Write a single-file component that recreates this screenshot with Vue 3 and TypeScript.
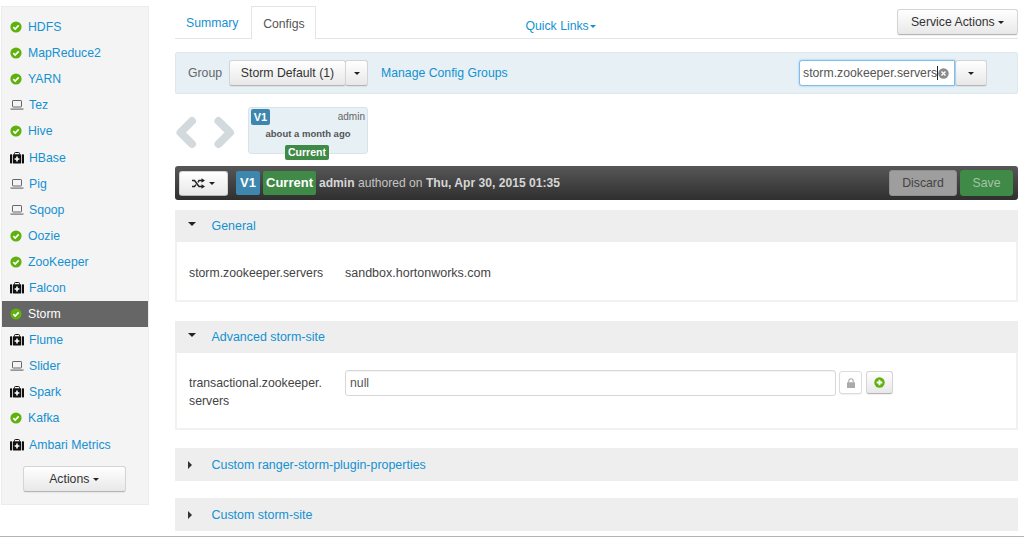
<template>
  <div class="page">
    <aside class="sidebar">
      <ul class="svc-list">
        <li v-for="svc in services" :key="svc.name" class="svc-item" :class="{ active: svc.name === 'Storm' }">
          <span class="svc-icon">
            <svg v-if="svc.icon === 'ok'" width="12" height="12" viewBox="0 0 12 12">
              <circle cx="6" cy="6" r="5.6" fill="#5fb10d" />
              <path d="M3.3 6.1 5.2 8 8.7 4.4" fill="none" stroke="#fff" stroke-width="1.7" />
            </svg>
            <svg v-else-if="svc.icon === 'laptop'" width="14" height="12" viewBox="0 0 14 12">
              <rect x="2.5" y="1.5" width="9" height="6.5" rx=".6" fill="none" stroke="#666" />
              <path d="M.3 9.5h13.4v.6l-.6.6H.9l-.6-.6z" fill="#777" />
            </svg>
            <svg v-else width="14" height="12" viewBox="0 0 14 12">
              <path d="M4.5 2.5V1.4Q4.5.5 5.4.5h3.2q.9 0 .9.9v1.1" fill="none" stroke="#111" />
              <rect x="0" y="2.3" width="2.2" height="9.2" rx=".7" fill="#111" />
              <rect x="3" y="2.3" width="8" height="9.2" fill="#111" />
              <rect x="11.8" y="2.3" width="2.2" height="9.2" rx=".7" fill="#111" />
              <path d="M6.2 4.6h1.6v1.6h1.6v1.6H7.800v1.600H6.200V7.800H4.600V6.200h1.600z" fill="#fff" />
            </svg>
          </span>
          <a class="svc-name" :class="'gap-' + svc.icon">{{ svc.name }}</a>
        </li>
      </ul>
      <div class="actions-wrap">
        <button class="btn actions-btn">Actions <i class="caret" /></button>
      </div>
    </aside>

    <main class="main">
      <div class="tabs">
        <a class="tab">Summary</a>
        <a class="tab current">Configs</a>
        <a class="quick-links">Quick Links<i class="caret blue" /></a>
        <button class="btn service-btn">Service Actions <i class="caret" /></button>
      </div>

      <div class="group-bar">
        <span class="group-label">Group</span>
        <button class="btn group-btn">Storm Default (1)</button>
        <button class="btn group-caret"><i class="caret" /></button>
        <a class="manage-link">Manage Config Groups</a>
        <div class="search-box">
          <span class="search-text">storm.zookeeper.servers</span><span class="text-cursor" />
          <svg class="search-clear" width="11" height="11" viewBox="0 0 11 11">
            <circle cx="5.500" cy="5.500" r="5.200" fill="#8b8b8b" />
            <path d="M3.500 3.500l4 4M7.500 3.500l-4 4" stroke="#fff" stroke-width="1.400" />
          </svg>
        </div>
        <button class="btn search-caret"><i class="caret" /></button>
      </div>

      <div class="versions">
        <svg class="chevrons" width="60" height="35" viewBox="0 0 60 35">
          <path d="M17 6 5.500 17.500 17 29" fill="none" stroke="#d3dade" stroke-width="8" stroke-linecap="round" stroke-linejoin="round" />
          <path d="M43.500 6 55 17.500 43.500 29" fill="none" stroke="#d3dade" stroke-width="8" stroke-linecap="round" stroke-linejoin="round" />
        </svg>
        <div class="version-box">
          <div class="version-top">
            <span class="v-tag small">V1</span>
            <span class="version-user">admin</span>
          </div>
          <div class="version-when">about a month ago</div>
          <span class="current-tag">Current</span>
        </div>
      </div>

      <div class="dark-bar">
        <button class="btn compare-btn">
          <svg width="13" height="11" viewBox="0 0 13 11">
            <path d="M0 2.500h2.500L7 8.500h3M0 8.500h2.500L4 6.600M6 4.400 7 2.500h3" fill="none" stroke="#222" stroke-width="1.500" />
            <path d="M9.500.2 13 2.500 9.500 4.800zM9.500 6.200 13 8.500l-3.500 2.300z" fill="#222" />
          </svg>
          <i class="caret" />
        </button>
        <span class="v-tag big">V1</span>
        <span class="cur-tag big">Current</span>
        <span class="authored"><b>admin</b> authored on <b>Thu, Apr 30, 2015 01:35</b></span>
        <button class="btn discard-btn">Discard</button>
        <button class="btn save-btn">Save</button>
      </div>

      <section class="panel">
        <header class="panel-head"><i class="caret head-caret" /><a>General</a></header>
        <div class="panel-body general-body">
          <span class="prop-name">storm.zookeeper.servers</span>
          <span class="prop-value">sandbox.hortonworks.com</span>
        </div>
      </section>

      <section class="panel advanced">
        <header class="panel-head"><i class="caret head-caret" /><a>Advanced storm-site</a></header>
        <div class="panel-body advanced-body">
          <span class="prop-name wrap">transactional.zookeeper.<br />servers</span>
          <div class="prop-input">null</div>
          <button class="btn lock-btn">
            <svg width="8" height="10" viewBox="0 0 8 10">
              <path d="M1.800 4.500V3a2.200 2.200 0 0 1 4.400 0v1.500" fill="none" stroke="#aaa" stroke-width="1.100" />
              <rect y="4.200" width="8" height="5.800" rx=".6" fill="#aaa" />
            </svg>
          </button>
          <button class="btn add-btn">
            <svg width="11" height="11" viewBox="0 0 11 11">
              <circle cx="5.500" cy="5.500" r="5.200" fill="#5fb10d" />
              <path d="M5.500 2.700v5.600M2.700 5.500h5.600" stroke="#fff" stroke-width="1.800" />
            </svg>
          </button>
        </div>
      </section>

      <section class="panel closed first-closed">
        <header class="panel-head"><i class="caret side head-caret" /><a>Custom ranger-storm-plugin-properties</a></header>
      </section>
      <section class="panel closed second-closed">
        <header class="panel-head"><i class="caret side head-caret" /><a>Custom storm-site</a></header>
      </section>
    </main>
    <div class="bottom-line" />
  </div>
</template>

<script setup lang="ts">
interface Service {
  name: string
  icon: 'ok' | 'laptop' | 'kit'
}

const services: Service[] = [
  { name: 'HDFS', icon: 'ok' },
  { name: 'MapReduce2', icon: 'ok' },
  { name: 'YARN', icon: 'ok' },
  { name: 'Tez', icon: 'laptop' },
  { name: 'Hive', icon: 'ok' },
  { name: 'HBase', icon: 'kit' },
  { name: 'Pig', icon: 'laptop' },
  { name: 'Sqoop', icon: 'laptop' },
  { name: 'Oozie', icon: 'ok' },
  { name: 'ZooKeeper', icon: 'ok' },
  { name: 'Falcon', icon: 'kit' },
  { name: 'Storm', icon: 'ok' },
  { name: 'Flume', icon: 'kit' },
  { name: 'Slider', icon: 'laptop' },
  { name: 'Spark', icon: 'kit' },
  { name: 'Kafka', icon: 'ok' },
  { name: 'Ambari Metrics', icon: 'kit' },
]
</script>

<style>
html,
body {
  margin: 0;
  background: #fff;
}
</style>

<style scoped>
.page {
  position: relative;
  width: 1024px;
  height: 537px;
  overflow: hidden;
  display: flex;
  align-items: flex-start;
  font-family: "Liberation Sans", Arial, sans-serif;
  font-size: 12.25px;
  color: #555;
  background: #fff;
}

a {
  color: #1491d1;
}

.caret {
  display: inline-block;
  width: 0;
  height: 0;
  vertical-align: middle;
  border-top: 3.5px solid #222;
  border-left: 3.5px solid transparent;
  border-right: 3.5px solid transparent;
}

.caret.blue {
  border-top-color: #1491d1;
  margin-left: 1px;
}

.caret.side {
  border-top: 4px solid transparent;
  border-bottom: 4px solid transparent;
  border-left: 4.500px solid #333;
  border-right: 0;
}

.btn {
  box-sizing: border-box;
  margin: 0;
  padding: 0;
  font: inherit;
  color: #333;
  border: 1px solid #d4d4d4;
  border-bottom-color: #b5b5b5;
  border-radius: 3px;
  background: linear-gradient(#fff, #e8e8e8);
  box-shadow: 0 1px 1px rgba(0, 0, 0, 0.06);
}

/* sidebar */
.sidebar {
  box-sizing: border-box;
  flex-shrink: 0;
  width: 148px;
  height: 499px;
  margin: 6px 0 0 1px;
  padding-top: 7px;
  background: #f4f4f4;
  border: 1px solid #ececec;
}

.svc-list {
  list-style: none;
  margin: 0;
  padding: 0;
}

.svc-item {
  display: flex;
  align-items: center;
  height: 26.1px;
  padding-left: 8px;
}

.svc-item.active {
  background: #666;
}

.svc-item.active .svc-name {
  color: #fff;
}

.svc-icon {
  display: flex;
  width: 15px;
  justify-content: flex-start;
}

.svc-name {
  margin-left: 3px;
}

.gap-laptop,
.gap-kit {
  margin-left: 4px;
}

.actions-wrap {
  display: flex;
  justify-content: center;
  margin-top: 8.3px;
  padding-right: 2px;
}

.actions-btn {
  width: 103px;
  height: 26px;
}

/* main */
.main {
  width: 843px;
  margin-left: 26px;
  flex-shrink: 0;
}

.tabs {
  position: relative;
  box-sizing: border-box;
  display: flex;
  align-items: flex-start;
  height: 39px;
  border-bottom: 1px solid #e4e4e4;
}

.tab {
  box-sizing: border-box;
  height: 33px;
  margin-top: 6px;
  padding: 10px 0 0;
  line-height: 14px;
  margin-left: 11px;
}

.tab.current {
  width: 65px;
  margin-left: 13px;
  text-align: center;
  color: #555;
  background: #fff;
  border: 1px solid #e4e4e4;
  border-bottom: 0;
}

.quick-links {
  margin-left: 209px;
  margin-top: 19px;
  line-height: 14px;
}

.service-btn {
  width: 121px;
  height: 26px;
  margin-left: auto;
  margin-top: 9px;
}

.group-bar {
  box-sizing: border-box;
  display: flex;
  align-items: center;
  height: 42px;
  margin-top: 13px;
  padding-left: 12px;
  background: #e6f0f5;
  border: 1px solid #dfe8ec;
  border-radius: 2px;
}

.group-label {
  width: 41px;
  color: #666;
}

.group-btn {
  width: 117px;
  height: 26px;
}

.group-caret {
  width: 23px;
  height: 26px;
  margin-left: -1px;
}

.manage-link {
  margin-left: 13px;
}

.search-box {
  box-sizing: border-box;
  position: relative;
  display: flex;
  align-items: center;
  width: 156px;
  height: 26px;
  margin-left: auto;
  padding-left: 3px;
  background: #fff;
  border: 1px solid #7fbdec;
  border-radius: 3px 0 0 3px;
  box-shadow: 0 0 2px rgba(82, 168, 236, 0.7);
  color: #555;
}

.text-cursor {
  width: 1px;
  height: 14px;
  background: #222;
}

.search-clear {
  position: absolute;
  right: 5px;
  top: 7px;
}

.search-caret {
  width: 32px;
  height: 26px;
  margin-right: 30px;
}

.versions {
  display: flex;
  align-items: flex-start;
  height: 72px;
}

.chevrons {
  margin-top: 21px;
  flex-shrink: 0;
  margin-right: 13px;
}

.version-box {
  box-sizing: border-box;
  position: relative;
  width: 120px;
  height: 47px;
  margin-top: 13px;
  padding: 1px 2px;
  background: #e6f0f5;
  border: 1px solid #d8e4ea;
  border-radius: 3px;
}

.version-top {
  display: flex;
  justify-content: space-between;
  align-items: flex-start;
}

.v-tag {
  box-sizing: border-box;
  display: inline-block;
  text-align: center;
  color: #fff;
  font-weight: bold;
  background: #3d87ae;
  border-radius: 2px;
}

.v-tag.small {
  width: 19px;
  height: 16px;
  line-height: 16px;
  font-size: 11px;
}

.version-user {
  font-size: 10px;
  line-height: 15px;
  color: #666;
}

.version-when {
  margin-top: 3px;
  text-align: center;
  font-size: 9.500px;
  font-weight: bold;
  color: #555;
}

.current-tag {
  position: absolute;
  left: 36px;
  top: 37px;
  width: 44px;
  height: 15px;
  line-height: 15px;
  text-align: center;
  font-size: 10.500px;
  font-weight: bold;
  color: #fff;
  background: #3f8a47;
  border-radius: 2px;
}

.dark-bar {
  box-sizing: border-box;
  display: flex;
  align-items: center;
  height: 34px;
  padding: 0 5px 0 4px;
  background: linear-gradient(#575757, #2f2f2f);
  border-radius: 3px;
}

.compare-btn {
  display: flex;
  align-items: center;
  justify-content: center;
  gap: 4px;
  width: 49px;
  height: 25px;
}

.v-tag.big {
  width: 24px;
  height: 24px;
  line-height: 24px;
  margin-left: 8px;
  font-size: 13px;
}

.cur-tag {
  width: 53px;
  height: 24px;
  line-height: 24px;
  margin-left: 3px;
  text-align: center;
  font-size: 13px;
  font-weight: bold;
  color: #fff;
  background: #3f8a47;
  border-radius: 2px;
}

.authored {
  margin-left: 3px;
  font-size: 12.1px;
  color: #c4c4c4;
  white-space: nowrap;
}

.authored b {
  color: #d6d6d6;
}

.discard-btn {
  width: 68px;
  height: 26px;
  margin-left: auto;
  color: #444;
  background: #9e9e9e;
  border-color: #8f8f8f;
}

.save-btn {
  width: 53px;
  height: 26px;
  margin-left: 3px;
  color: #a5c4a8;
  background: #3f8a47;
  border-color: #3f8a47;
}

.panel {
  margin-top: 10px;
}

.advanced {
  margin-top: 19px;
}

.first-closed {
  margin-top: 18px;
}

.second-closed {
  margin-top: 17px;
}

.panel-head {
  display: flex;
  align-items: center;
  height: 32px;
  padding-left: 13px;
  font-size: 12.45px;
  background: #eeeeee;
}

.closed .panel-head {
  height: 33px;
}

.head-caret {
  margin-top: -5px;
  border-top-width: 4.500px;
  border-left-width: 4.500px;
  border-right-width: 4.500px;
}

.closed .head-caret {
  margin-top: 0;
  border-top-width: 4px;
  border-left-width: 4.500px;
}

.panel-head a {
  margin-left: 15.500px;
}

.closed .panel-head a {
  margin-left: 19.500px;
}

.panel-body {
  box-sizing: border-box;
  display: flex;
  border: 2px solid #f1f1f1;
  border-top: 0;
  padding-left: 12px;
}

.general-body {
  align-items: center;
  height: 60px;
  padding-top: 3px;
  color: #333;
}

.prop-name {
  width: 156px;
  color: #444;
  flex-shrink: 0;
}

.prop-value {
  font-size: 12.500px;
  color: #444;
}

.advanced-body {
  height: 77px;
  padding-top: 17px;
  align-items: flex-start;
}

.prop-name.wrap {
  line-height: 18px;
  margin-top: 4px;
}

.prop-input {
  box-sizing: border-box;
  width: 491px;
  height: 26px;
  line-height: 24px;
  padding-left: 4px;
  border: 1px solid #d8d8d8;
  border-radius: 3px;
  color: #555;
  box-shadow: inset 0 1px 1px rgba(0, 0, 0, 0.05);
}

.lock-btn {
  display: flex;
  align-items: center;
  justify-content: center;
  width: 23px;
  height: 23px;
  margin: 1px 0 0 3px;
  background: #fff;
  border-color: #ddd;
}

.add-btn {
  display: flex;
  align-items: center;
  justify-content: center;
  width: 27px;
  height: 23px;
  margin: 1px 0 0 4px;
}

.bottom-line {
  position: absolute;
  left: 0;
  right: 0;
  bottom: 0;
  height: 1px;
  background: #b4b4b4;
}
</style>
